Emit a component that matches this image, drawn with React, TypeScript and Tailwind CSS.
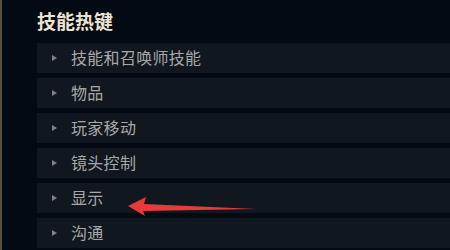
const items = ['技能和召唤师技能', '物品', '玩家移动', '镜头控制', '显示', '沟通'];

function Row({ label }: { label: string }) {
  return (
    <div className="h-[30px] flex items-center bg-[#11171f]">
      <svg width="5" height="6" viewBox="0 0 5 6" className="ml-[15px] mr-[14px]">
        <path d="M0 0 L5 3 L0 6 Z" fill="#7d8288" />
      </svg>
      <span className="text-[16px] leading-none text-[#a6a9a8] tracking-[0.3px] -mt-[2px]">{label}</span>
    </div>
  );
}

export default function App() {
  return (
    <div
      className="relative w-[450px] h-[250px] overflow-hidden bg-[#020a13] flex"
      style={{ fontFamily: '"Noto Sans CJK SC", "Noto Sans", sans-serif' }}
    >
      <div className="w-[2px] bg-[#5b4f35]" />
      <div className="flex-1 pl-[35px] pt-[7px]">
        <div className="h-[28px] flex items-center text-[19px] font-bold text-[#ece3d0] leading-none -mt-[1px]">技能热键</div>
        <div className="mt-[9px] flex flex-col gap-[5px]">
          {items.map((it) => (
            <Row key={it} label={it} />
          ))}
        </div>
      </div>
      <svg className="absolute left-0 top-0" width="450" height="250" viewBox="0 0 450 250">
        <path d="M128 206 L146 197 L144 204 L256 209 L143 211 L145 216 Z" fill="#e63a3c" />
      </svg>
    </div>
  );
}
